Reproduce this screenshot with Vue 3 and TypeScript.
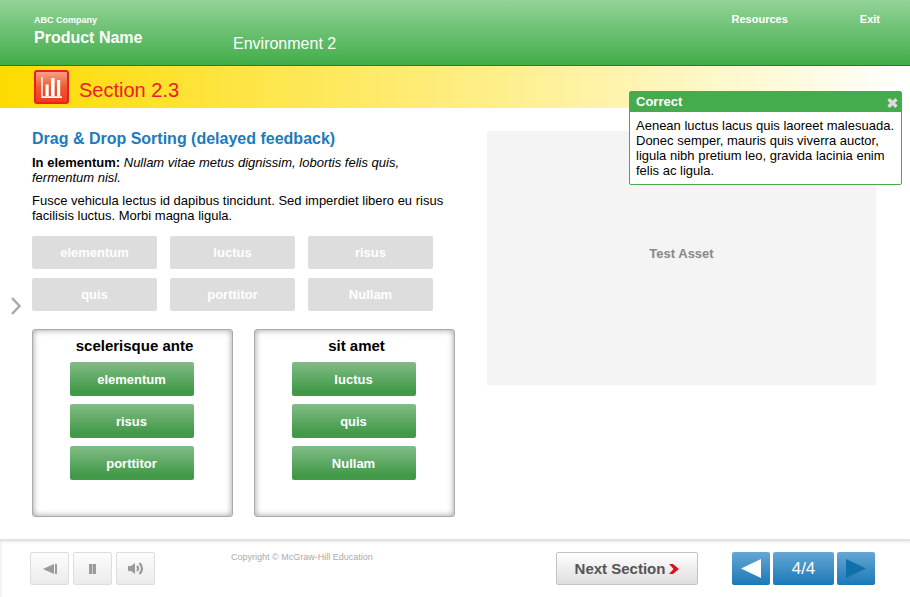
<script setup lang="ts">
import { ref } from 'vue'

interface Bin {
  title: string
  items: string[]
}

const choices: string[] = ['elementum', 'luctus', 'risus', 'quis', 'porttitor', 'Nullam']
const bins: Bin[] = [
  { title: 'scelerisque ante', items: ['elementum', 'risus', 'porttitor'] },
  { title: 'sit amet', items: ['luctus', 'quis', 'Nullam'] },
]
const page = ref(4)
const total = 4
const feedbackOpen = ref(true)
</script>

<template>
  <div class="page">
    <header class="header">
      <div class="brand">
        <span class="company">ABC Company</span>
        <span class="product">Product Name</span>
      </div>
      <span class="environment">Environment 2</span>
      <nav class="links">
        <a href="#resources">Resources</a>
        <a href="#exit">Exit</a>
      </nav>
    </header>

    <div class="section-bar">
      <svg class="section-icon" viewBox="0 0 35 34" aria-hidden="true">
        <defs>
          <linearGradient id="tile" x1="0" y1="0" x2="0" y2="1">
            <stop offset="0" stop-color="#f6a184" />
            <stop offset="0.5" stop-color="#ee5a30" />
            <stop offset="1" stop-color="#ee3a20" />
          </linearGradient>
        </defs>
        <rect width="35" height="34" rx="3" fill="#ee1c23" />
        <rect x="2" y="2" width="31" height="30" rx="1" fill="url(#tile)" />
        <path d="M7.300 7h1.400v19.300h19.300v1.700H7.300z" fill="#fff" />
        <path d="M11.500 14.500h3.200v11.800h-3.200zM17 8h3.600v18.300H17zM23 10h3.200v16.300H23z" fill="#fff" />
      </svg>
      <h1>Section 2.3</h1>
    </div>

    <main class="main">
      <button class="drawer" type="button" aria-label="Open menu">
        <svg viewBox="0 0 10 18" aria-hidden="true">
          <path d="M1 1l7.500 8L1 17" fill="none" stroke="#aaa" stroke-width="2.500" />
        </svg>
      </button>

      <section class="activity">
        <h2>Drag &amp; Drop Sorting (delayed feedback)</h2>
        <p><strong>In elementum:</strong> <em>Nullam vitae metus dignissim, lobortis felis quis,<br />fermentum nisl.</em></p>
        <p>Fusce vehicula lectus id dapibus tincidunt. Sed imperdiet libero eu risus<br />facilisis luctus. Morbi magna ligula.</p>

        <div class="choices">
          <button v-for="c in choices" :key="c" class="choice" type="button" disabled>{{ c }}</button>
        </div>

        <div class="bins">
          <div v-for="b in bins" :key="b.title" class="bin">
            <h3>{{ b.title }}</h3>
            <button v-for="i in b.items" :key="i" class="placed" type="button">{{ i }}</button>
          </div>
        </div>
      </section>

      <div class="asset">Test Asset</div>
    </main>

    <footer class="footer">
      <div class="media">
        <button type="button" aria-label="Restart">
          <svg width="14" height="10" viewBox="0 0 14 10" aria-hidden="true">
            <path d="M11 0v10L0 5zM12 0h2v10h-2z" fill="#999b9c" />
          </svg>
        </button>
        <button type="button" aria-label="Pause">
          <svg width="7" height="10" viewBox="0 0 7 10" aria-hidden="true">
            <path d="M0 0h3v10H0zM4 0h3v10H4z" fill="#999b9c" />
            <path d="M3 0h1v10H3z" fill="#c8c9ca" />
          </svg>
        </button>
        <button type="button" aria-label="Volume">
          <svg width="16" height="13" viewBox="0 0 16 13" aria-hidden="true">
            <path d="M0 4h3l4-3v11l-4-3H0z" fill="#999b9c" />
            <path d="M9 4q2.200 2.500 0 5M11.500 1q5 5.500 0 11" fill="none" stroke="#999b9c" stroke-width="2.200" />
          </svg>
        </button>
      </div>
      <small class="copyright">Copyright © McGraw-Hill Education</small>
      <button class="next-section" type="button">
        Next Section
        <svg width="10" height="10" viewBox="0 0 10 10" aria-hidden="true">
          <path d="M0 0h4l6 5-6 5H0l4.500-5z" fill="#d8141c" />
        </svg>
      </button>
      <div class="pager">
        <button type="button" aria-label="Previous page" @click="page = Math.max(1, page - 1)">
          <svg width="20" height="19" viewBox="0 0 20 19" aria-hidden="true">
            <path d="M20 0v19L0 9.500z" fill="#fff" />
          </svg>
        </button>
        <output class="count">{{ page }}/{{ total }}</output>
        <button type="button" aria-label="Next page" :disabled="page === total" @click="page++">
          <svg width="20" height="19" viewBox="0 0 20 19" aria-hidden="true">
            <path d="M0 0l20 9.500L0 19z" :fill="page === total ? '#1070aa' : '#fff'" />
          </svg>
        </button>
      </div>
    </footer>

    <aside v-if="feedbackOpen" class="feedback">
      <div class="feedback-head">
        <strong>Correct</strong>
        <button type="button" aria-label="Close" @click="feedbackOpen = false">
          <svg width="11" height="10" viewBox="0 0 11 10" aria-hidden="true">
            <path d="M1.500 1.200l8 7.600M9.500 1.200l-8 7.600" stroke="#dcdcdc" stroke-width="3.400" />
          </svg>
        </button>
      </div>
      <p>Aenean luctus lacus quis laoreet malesuada.<br />Donec semper, mauris quis viverra auctor,<br />ligula nibh pretium leo, gravida lacinia enim<br />felis ac ligula.</p>
    </aside>
  </div>
</template>

<style>
body {
  margin: 0;
  background: #fff;
}
</style>

<style scoped>
* {
  box-sizing: border-box;
}
.page {
  position: relative;
  display: flex;
  flex-direction: column;
  min-height: 100vh;
  font-family: "Liberation Sans", Arial, sans-serif;
  font-size: 13px;
  line-height: 15px;
  color: #000;
}
button {
  padding: 0;
  border: 0;
  background: none;
  font-family: inherit;
}
svg {
  display: block;
}
h1, h2, h3, p {
  margin: 0;
}
.header {
  display: flex;
  height: 66px;
  padding: 0 30px 0 34px;
  background: linear-gradient(#93d398, #41ad49);
  border-bottom: 1px solid #1f7f2b;
  color: #fff;
}
.brand {
  display: flex;
  flex-direction: column;
  width: 199px;
  padding-top: 15px;
  font-weight: bold;
}
.company {
  font-size: 9px;
  line-height: 11px;
}
.product {
  font-size: 16px;
  line-height: 24px;
}
.environment {
  padding-top: 34px;
  font-size: 16px;
  line-height: 20px;
}
.links {
  display: flex;
  gap: 72px;
  margin-left: auto;
  padding-top: 12px;
}
.links a {
  color: #fff;
  font-size: 11px;
  font-weight: bold;
  text-decoration: none;
}
.section-bar {
  display: flex;
  gap: 10px;
  height: 42px;
  padding: 4px 34px 0;
  background: linear-gradient(90deg, #fddb00, #fff);
}
.section-icon {
  width: 35px;
  height: 34px;
}
h1 {
  color: #ed1c24;
  font-size: 20px;
  font-weight: normal;
  line-height: 40px;
}
.main {
  position: relative;
  display: grid;
  grid-template-columns: 423fr 389fr;
  gap: 32px;
  flex: 1;
  align-items: start;
  padding: 23px 34px 22px 32px;
}
.drawer {
  position: absolute;
  left: 11px;
  top: 189px;
}
.drawer svg {
  width: 10px;
  height: 18px;
}
h2 {
  margin-bottom: 9px;
  color: #1c7bbb;
  font-size: 16px;
  line-height: 15px;
}
.activity p {
  margin-bottom: 8px;
  white-space: nowrap;
}
.choices {
  display: grid;
  grid-template-columns: repeat(3, 125px);
  gap: 9px 13px;
  padding-top: 5px;
}
.choice {
  height: 33px;
  border-radius: 2px;
  background: #ddd;
  color: #fff;
  font-size: 13px;
  font-weight: bold;
}
.bins {
  display: grid;
  grid-template-columns: 1fr 1fr;
  gap: 21px;
  margin-top: 18px;
}
.bin {
  display: flex;
  flex-direction: column;
  align-items: center;
  gap: 8px;
  min-height: 188px;
  padding: 7px 2px 8px 0;
  border: 1px solid #aaa;
  border-radius: 3px;
  box-shadow: inset 0 0 6px #999;
}
h3 {
  padding-left: 6px;
  font-size: 15px;
  line-height: 17px;
}
.placed {
  width: 124px;
  height: 34px;
  border-radius: 2px;
  background: linear-gradient(#82bc87, #429a49 85%);
  color: #fff;
  font-size: 13px;
  font-weight: bold;
}
.asset {
  height: 254px;
  background: #f4f4f4;
  color: #888;
  font-weight: bold;
  line-height: 246px;
  text-align: center;
}
.footer {
  display: flex;
  height: 58px;
  padding: 11px 35px 0 29px;
  border-top: 2px solid #e2e2e2;
  box-shadow: inset 0 3px 3px -2px #e8e8e8, inset 2px 0 #f4f4f4;
}
.media {
  display: flex;
  gap: 4px;
  width: 202px;
  padding-left: 1px;
}
.media button {
  display: grid;
  place-items: center;
  width: 39px;
  height: 33px;
  border: 1px solid #ddd;
  border-radius: 2px;
  background: linear-gradient(#fdfdfd, #ebebeb);
}
.copyright {
  color: #aaa;
  font-size: 9px;
  line-height: 11px;
}
.next-section {
  display: flex;
  align-items: center;
  justify-content: center;
  gap: 4px;
  width: 142px;
  height: 33px;
  margin-left: auto;
  border: 1px solid #c4c4c4;
  border-radius: 2px;
  background: linear-gradient(#fff, #dedede);
  color: #555;
  font-size: 15px;
  font-weight: bold;
}
.pager {
  display: flex;
  gap: 3px;
  margin-left: 34px;
}
.pager button,
.count {
  display: grid;
  place-items: center;
  width: 38px;
  height: 33px;
  border-radius: 2px;
  background: linear-gradient(#66a7d4, #1a78b8);
}
.pager .count {
  width: 61px;
  color: #fff;
  font-size: 17px;
}
.feedback {
  position: absolute;
  top: 91px;
  right: 8px;
  width: 273px;
  border: 1px solid #44ac4c;
  border-radius: 2px;
  background: #fff;
}
.feedback-head {
  display: flex;
  justify-content: space-between;
  height: 20px;
  padding: 2px 3px 0 6px;
  background: #44ac4c;
  color: #fff;
}
.feedback-head button {
  align-self: start;
  padding-top: 4px;
}
.feedback p {
  padding: 6px;
  white-space: nowrap;
}
</style>
